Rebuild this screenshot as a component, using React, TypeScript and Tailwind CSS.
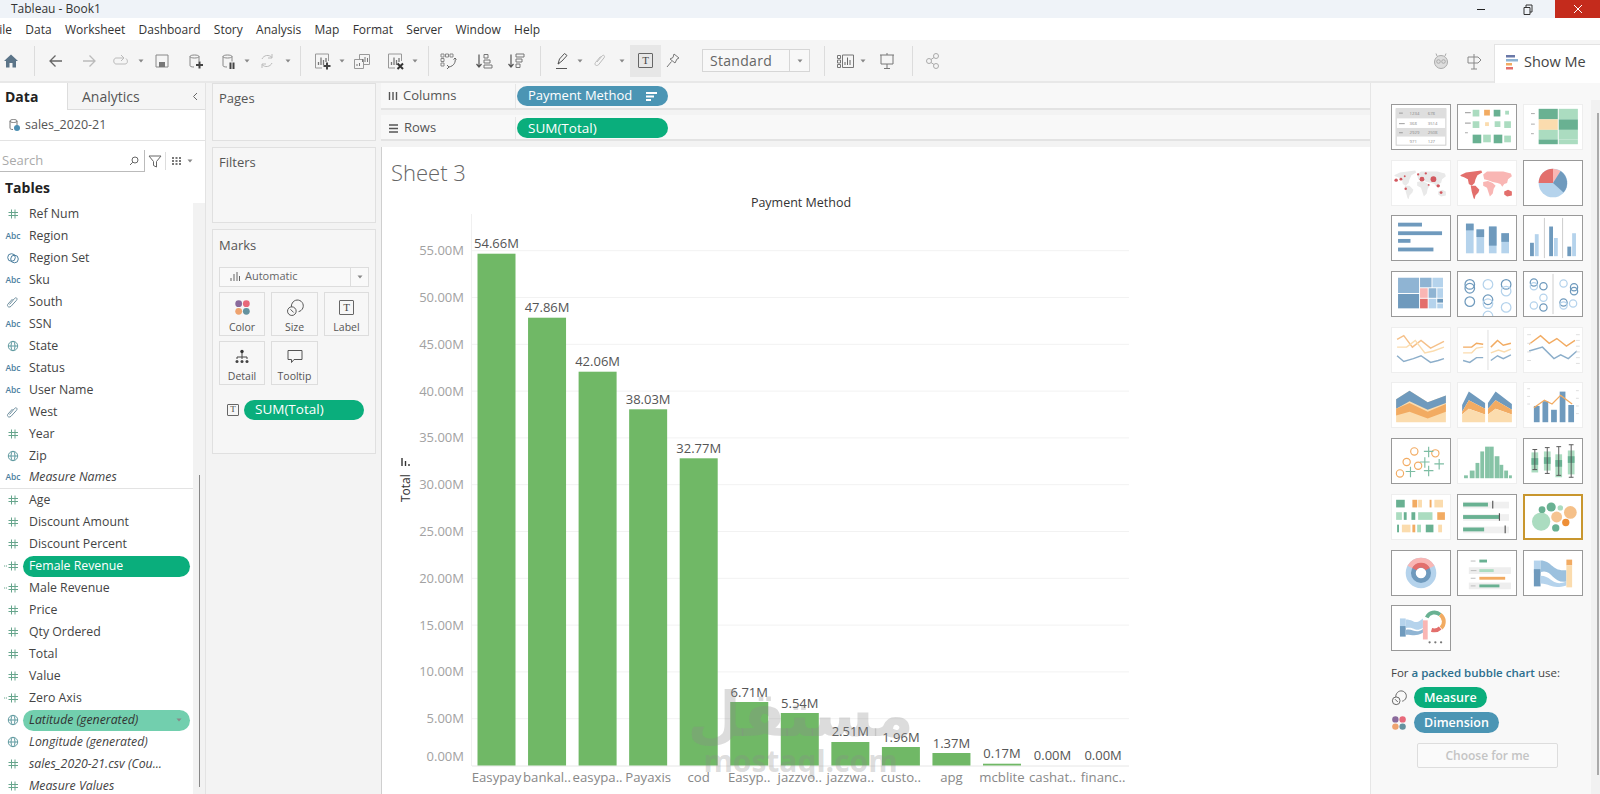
import type { ReactNode } from "react";

const MENU = ["File", "Data", "Worksheet", "Dashboard", "Story", "Analysis", "Map", "Format", "Server", "Window", "Help"];

type FieldKind = "hash" | "abc" | "set" | "clip" | "globe" | "calc";

const DIMENSIONS: { name: string; kind: FieldKind; italic?: boolean }[] = [
  { name: "Ref Num", kind: "hash" },
  { name: "Region", kind: "abc" },
  { name: "Region Set", kind: "set" },
  { name: "Sku", kind: "abc" },
  { name: "South", kind: "clip" },
  { name: "SSN", kind: "abc" },
  { name: "State", kind: "globe" },
  { name: "Status", kind: "abc" },
  { name: "User Name", kind: "abc" },
  { name: "West", kind: "clip" },
  { name: "Year", kind: "hash" },
  { name: "Zip", kind: "globe" },
  { name: "Measure Names", kind: "abc", italic: true },
];

const MEASURES: { name: string; kind: FieldKind; italic?: boolean; pill?: "solid" | "light" }[] = [
  { name: "Age", kind: "hash" },
  { name: "Discount Amount", kind: "hash" },
  { name: "Discount Percent", kind: "hash" },
  { name: "Female Revenue", kind: "calc", pill: "solid" },
  { name: "Male Revenue", kind: "calc" },
  { name: "Price", kind: "hash" },
  { name: "Qty Ordered", kind: "hash" },
  { name: "Total", kind: "hash" },
  { name: "Value", kind: "hash" },
  { name: "Zero Axis", kind: "calc" },
  { name: "Latitude (generated)", kind: "globe", italic: true, pill: "light" },
  { name: "Longitude (generated)", kind: "globe", italic: true },
  { name: "sales_2020-21.csv (Cou...", kind: "hash", italic: true },
  { name: "Measure Values", kind: "hash", italic: true },
];

// bars in page coordinates: top of bar, label y
const BARS = [
  { cat: "Easypay", label: "54.66M", top: 253.7, ly: 243 },
  { cat: "bankal..", label: "47.86M", top: 317.7, ly: 307.5 },
  { cat: "easypa..", label: "42.06M", top: 371.7, ly: 361 },
  { cat: "Payaxis", label: "38.03M", top: 409.3, ly: 399 },
  { cat: "cod", label: "32.77M", top: 458.3, ly: 448 },
  { cat: "Easyp..", label: "6.71M", top: 702, ly: 692 },
  { cat: "jazzvo..", label: "5.54M", top: 713, ly: 703 },
  { cat: "jazzwa..", label: "2.51M", top: 742, ly: 731 },
  { cat: "custo..", label: "1.96M", top: 747, ly: 737 },
  { cat: "apg", label: "1.37M", top: 753, ly: 743 },
  { cat: "mcblite", label: "0.17M", top: 763.7, ly: 753 },
  { cat: "cashat..", label: "0.00M", top: 765.5, ly: 755 },
  { cat: "financ..", label: "0.00M", top: 765.5, ly: 755 },
];

const AXIS = [55, 50, 45, 40, 35, 30, 25, 20, 15, 10, 5, 0];

function Ico({ children, w = 20, h = 20 }: { children: ReactNode; w?: number; h?: number }) {
  return (
    <svg width={w} height={h} viewBox={`0 0 ${w} ${h}`} fill="none" stroke="#777" strokeWidth="1" className="shrink-0 block">
      {children}
    </svg>
  );
}

function Caret({ className = "" }: { className?: string }) {
  return (
    <svg width="6" height="4" viewBox="0 0 6 4" className={`shrink-0 block ${className}`}>
      <path d="M0.5 0.5h5L3 3.5z" fill="#888" />
    </svg>
  );
}

function Sep({ className = "" }: { className?: string }) {
  return <div className={`w-px h-[30px] bg-[#dcdcdc] shrink-0 ${className}`} />;
}

function Cylinder({ badge }: { badge: "plus" | "pause" }) {
  return (
    <Ico>
      <path d="M5 5.500c0-2 9-2 9 0v5M5 5.500c0 2 9 2 9 0M5 5.500v9c0 1 1.500 1.500 4 1.500" stroke="#888" />
      {badge === "plus" ? (
        <path d="M14.500 10.500v7M11 14h7" stroke="#444" strokeWidth="2" />
      ) : (
        <path d="M12.500 11.500v6.500M15.500 11.500v6.500" stroke="#444" strokeWidth="2" />
      )}
    </Ico>
  );
}

function BarsBox({ badge }: { badge?: "plus" | "x" }) {
  return (
    <Ico>
      <path d="M14 3H3.500v14H10M14 3h2.500v7" stroke="#999" />
      <path d="M6.500 14v-3M9 14V6.500M11.500 14V9M14 11V7" stroke="#777" strokeWidth="1.300" />
      {badge === "plus" && <path d="M15 11.500v7M11.500 15h7" stroke="#444" strokeWidth="2" />}
      {badge === "x" && <path d="M12.500 12.500l5.500 5.500M18 12.500L12.500 18" stroke="#333" strokeWidth="2" />}
    </Ico>
  );
}

function HomeIcon() {
  return (
    <Ico>
      <path d="M10 3.500L3 10h2v6.500h3.500V12h3v4.500H15V10h2z" fill="#5b7488" stroke="none" />
    </Ico>
  );
}

function TBox({ size = 15, font = "text-[10px]" }: { size?: number; font?: string }) {
  return (
    <span
      className={`inline-flex items-center justify-center border border-[#666] rounded-[1px] text-[#444] font-['Liberation_Serif',serif] shrink-0 ${font}`}
      style={{ width: size, height: size }}
    >
      T
    </span>
  );
}

function ColorDots({ size = 20 }: { size?: number }) {
  return (
    <svg width={size} height={size} viewBox="0 0 20 20" className="block shrink-0">
      <circle cx="5.500" cy="5.500" r="4" fill="#8a6a9c" />
      <circle cx="14.500" cy="5.500" r="4" fill="#e8697a" />
      <circle cx="5.500" cy="14.500" r="4" fill="#eea36f" />
      <circle cx="14.500" cy="14.500" r="4" fill="#64929f" />
    </svg>
  );
}

function SizeGlyph({ size = 20 }: { size?: number }) {
  return (
    <svg width={size} height={size} viewBox="0 0 20 20" fill="none" stroke="#555" strokeWidth="1.100" className="block shrink-0">
      <circle cx="6.500" cy="13.500" r="4.800" />
      <path d="M5 11.500l3.500 3.500" />
      <path d="M7 4.500A6.500 6.500 0 1 1 14 14" />
      <path d="M7 4.500A6 6 0 0 0 6 8.700" />
    </svg>
  );
}

function FieldIcon({ kind }: { kind: FieldKind }) {
  if (kind === "abc") {
    return <span className="text-[8.500px] font-semibold text-[#4c7f9f] leading-none w-[16px] text-center">Abc</span>;
  }
  if (kind === "hash" || kind === "calc") {
    return (
      <svg width="18" height="12" viewBox="0 0 18 12" fill="none" stroke="#66a58c" strokeWidth="1" className="block">
        <path d="M7.500 1.500v9M11 1.500v9M4.500 4.500h9.500M4.500 7.500h9.500" />
        {kind === "calc" && <path d="M0 6h3" strokeDasharray="1.200 0.800" />}
      </svg>
    );
  }
  if (kind === "globe") {
    return (
      <svg width="18" height="12" viewBox="0 0 18 12" fill="none" stroke="#5f9aa0" strokeWidth="1" className="block">
        <circle cx="9" cy="6" r="4.700" />
        <ellipse cx="9" cy="6" rx="2" ry="4.700" />
        <path d="M4.300 6h9.400" />
      </svg>
    );
  }
  if (kind === "set") {
    return (
      <svg width="18" height="12" viewBox="0 0 18 12" fill="none" stroke="#4c7f9f" strokeWidth="1" className="block">
        <circle cx="7.500" cy="5.500" r="3.800" />
        <circle cx="10.500" cy="7" r="3.800" />
      </svg>
    );
  }
  return (
    <svg width="18" height="12" viewBox="0 0 18 12" fill="none" stroke="#6f8f9f" strokeWidth="1" className="block">
      <path d="M5.500 8.500l5-6c1.500-1.700 3.500 0 2 1.800l-5.500 6c-2.500 2-4.500-.5-3-2.300l4.500-5" />
    </svg>
  );
}

function Pill({ color, children, className = "" }: { color: string; children: ReactNode; className?: string }) {
  return <div className={`rounded-full flex items-center text-white ${color} ${className}`}>{children}</div>;
}

function MarkCell({ label, children, width }: { label: string; children: ReactNode; width: string }) {
  return (
    <div className={`h-[44px] border border-[#ddd] bg-[#f7f7f7] flex flex-col items-center pt-[6px] ${width}`}>
      <div className="h-[18px] flex items-center">{children}</div>
      <span className="text-[10.500px] text-[#555] mt-[3px] leading-[14px]">{label}</span>
    </div>
  );
}

function Thumb({ on, gold, children }: { on?: boolean; gold?: boolean; children: ReactNode }) {
  const border = gold ? "border-2 border-[#c8962e]" : on ? "border border-[#999]" : "border border-[#eeeeee]";
  return (
    <div className={`w-[60px] h-[46px] bg-white box-border ${border}`}>
      <svg viewBox="0 0 60 46" className="w-full h-full block">
        {children}
      </svg>
    </div>
  );
}

const B = "#6f9abd";
const BL = "#b5d3ec";
const G = "#69b192";
const GL = "#abdcc0";
const O = "#f2ab62";
const OL = "#fbdcae";
const R = "#e36f6c";
const P = "#f9b6b4";

// rough continents shared by the two map thumbnails
const NORTH_AMERICA = "M2 15l6-3 8-1 8-1 1 2-5 3-2 4-1 4-3 3-3-2-1-5-4-2-3-1z";
const SOUTH_AMERICA = "M13 26l5 0 4 4-1 3-3 3-1 4-1-1-2-7z";
const EURASIA = "M26 14l4-3 8 0 9 0 8 2 1 3-4 3-1 4-3 1-2 3-2-3-3-1-5-1-5-2-4-1z";
const AFRICA = "M26 22l5-1 5 2 3 3-2 3-1 5-3 3-2-6-1-3-4-2z";
const AUSTRALIA = "M48 32l4-2 4 2 0 4-5 1-3-2z";

function ThumbGrid() {
  return (
    <div className="grid grid-cols-[60px_60px_60px] gap-x-[6px] gap-y-[9.700px] w-[192px]">
      <Thumb on>
        <rect x="4" y="4" width="52" height="38" fill="#fff" stroke="#ccc" />
        <rect x="4" y="4" width="52" height="10" fill="#dedede" />
        <rect x="4" y="24" width="52" height="9" fill="#dedede" />
        {[
          ["1234", "678", 10.500],
          ["368", "3514", 20.500],
          ["2929", "2508", 30],
          ["971", "127", 39.500],
        ].map(([a, b, y]) => (
          <g key={String(a)} fill="#888" fontSize="4.500">
            <text x="18" y={y as number}>{a}</text>
            <text x="37" y={y as number}>{b}</text>
          </g>
        ))}
        <path d="M7 8.500h4M7 19.500h6M7 29h4" stroke="#999" />
      </Thumb>
      <Thumb on>
        <path d="M7 8h6M7 19h6M7 29h3" stroke="#aaa" strokeWidth="1.200" />
        <rect x="15" y="5" width="7" height="7" fill={GL} />
        <rect x="27" y="5" width="6" height="6" fill={O} />
        <rect x="37" y="5" width="7" height="7" fill={G} />
        <rect x="49" y="6" width="4" height="4" fill={GL} />
        <rect x="15" y="17" width="7" height="7" fill={GL} />
        <rect x="28" y="18" width="4" height="4" fill={OL} />
        <rect x="38" y="17" width="6" height="6" fill={GL} />
        <rect x="48" y="17" width="7" height="7" fill={GL} />
        <rect x="15" y="31" width="9" height="9" fill={G} />
        <rect x="26" y="31" width="8" height="8" fill={GL} />
        <rect x="37" y="31" width="9" height="9" fill={G} />
        <rect x="48" y="32" width="7" height="7" fill={GL} />
      </Thumb>
      <Thumb>
        <rect x="15" y="4" width="20" height="11" fill={G} />
        <rect x="36" y="4" width="20" height="11" fill={GL} />
        <rect x="15" y="15" width="20" height="11" fill={OL} />
        <rect x="36" y="15" width="20" height="11" fill={G} />
        <rect x="15" y="26" width="20" height="10" fill={GL} />
        <rect x="36" y="26" width="20" height="10" fill={GL} />
        <rect x="15" y="36" width="20" height="5" fill={G} />
        <rect x="36" y="36" width="20" height="5" fill={GL} />
        <path d="M7 9h4M7 20h4M7 30h3" stroke="#aaa" />
      </Thumb>
      <Thumb>
        <g fill="#e9e9e9">
          <path d={NORTH_AMERICA} />
          <path d={SOUTH_AMERICA} />
          <path d={EURASIA} />
          <path d={AFRICA} />
          <path d={AUSTRALIA} />
        </g>
        {[[4, 20, 1.800], [9, 19, 1.500], [13, 16, 1], [27, 14, 1.200], [31, 19, 2.500], [43, 19, 3], [35, 13, 1.200], [48, 26, 1.800], [14, 29, 1.300], [51, 33, 1.500], [38, 25, 1]].map(([x, y, r]) => (
          <circle key={`${x}-${y}`} cx={x} cy={y} r={r} fill="#d2585f" />
        ))}
      </Thumb>
      <Thumb>
        <path d={NORTH_AMERICA} fill={R} />
        <path d={SOUTH_AMERICA} fill={R} />
        <path d={EURASIA} fill={P} />
        <path d={AFRICA} fill={P} />
        <path d={AUSTRALIA} fill={R} />
      </Thumb>
      <Thumb on>
        <circle cx="30" cy="23" r="15" fill={BL} />
        <path d="M30 23V8a15 15 0 0 0-15 15z" fill={R} />
        <path d="M30 23V8a15 15 0 0 1 8 2.500z" fill={P} />
        <path d="M30 23l8-12.500A15 15 0 0 1 41 33z" fill={B} />
      </Thumb>
      <Thumb on>
        <rect x="6" y="7" width="25" height="4" fill={B} />
        <rect x="6" y="16" width="46" height="4" fill={B} />
        <rect x="6" y="24" width="13" height="4" fill={B} />
        <rect x="6" y="33" width="37" height="4" fill={B} />
      </Thumb>
      <Thumb on>
        {[[8, 8, 7], [19, 14, 8], [32, 11, 20], [45, 18, 9]].map(([x, t, d]) => (
          <g key={x}>
            <rect x={x} y={t} width="8" height={39 - t} fill={BL} />
            <rect x={x} y={t} width="8" height={d} fill={B} />
          </g>
        ))}
      </Thumb>
      <Thumb on>
        <path d="M21 2v42M40 2v42" stroke="#ccc" />
        <rect x="6" y="28" width="4" height="14" fill={B} />
        <rect x="11" y="19" width="4" height="23" fill={BL} />
        <rect x="26" y="11" width="4" height="31" fill={B} />
        <rect x="31" y="23" width="4" height="19" fill={BL} />
        <rect x="45" y="32" width="4" height="10" fill={B} />
        <rect x="50" y="18" width="4" height="24" fill={BL} />
      </Thumb>
      <Thumb on>
        <rect x="6" y="6" width="22" height="16" fill="#8fb4d3" />
        <rect x="6" y="23" width="22" height="15" fill={B} />
        <rect x="29" y="6" width="12" height="10" fill="#8fb4d3" />
        <rect x="42" y="6" width="11" height="10" fill={BL} />
        <rect x="29" y="17" width="8" height="10" fill={P} />
        <rect x="38" y="17" width="8" height="10" fill="#8fb4d3" />
        <rect x="47" y="17" width="6" height="10" fill={BL} />
        <rect x="29" y="28" width="8" height="10" fill={R} />
        <rect x="38" y="28" width="8" height="10" fill={BL} />
        <rect x="47" y="28" width="6" height="4" fill={B} />
        <rect x="47" y="33" width="6" height="5" fill={BL} />
      </Thumb>
      <Thumb on>
        <g fill="none" strokeWidth="1.300">
          {[[12, 13, B], [12, 17, B], [31, 13, BL], [12, 31, B], [31, 29, B], [31, 33, BL], [50, 13, B], [50, 20, BL], [50, 37, BL], [31, 46, BL]].map(([x, y, c]) => (
            <circle key={`${x}-${y}`} cx={x as number} cy={y as number} r="5" stroke={c as string} />
          ))}
        </g>
      </Thumb>
      <Thumb on>
        <path d="M30 2v42" stroke="#ccc" />
        <g fill="none" strokeWidth="1.300">
          {[[10, 11, B], [10, 15, BL], [20, 15, B], [20, 27, BL], [10, 35, BL], [20, 37, B], [41, 12, BL], [52, 16, B], [52, 20, B], [41, 32, B], [41, 35, BL], [51, 33, BL]].map(([x, y, c]) => (
            <circle key={`${x}-${y}`} cx={x as number} cy={y as number} r="3.800" stroke={c as string} />
          ))}
        </g>
      </Thumb>
      <Thumb>
        <path d="M5 12l7-4 9 12 9-7 10 8 14-7" stroke={O} strokeWidth="1.500" fill="none" opacity=".75" />
        <path d="M5 20l10 0 9-7 10 13 9-2 11-4" stroke={OL} strokeWidth="1.500" fill="none" />
        <path d="M5 29l7 6 10-3 8-3 10 7 8-2 6-2" stroke={B} strokeWidth="1.500" fill="none" opacity=".8" />
      </Thumb>
      <Thumb>
        <path d="M31 2v42" stroke="#ddd" />
        <path d="M5 20h9l5-4 7 1" stroke={O} strokeWidth="1.500" fill="none" />
        <path d="M5 26h9l5-5 7-1" stroke={OL} strokeWidth="1.500" fill="none" />
        <path d="M5 34l7 2 7-5 7 0" stroke={B} strokeWidth="1.500" fill="none" opacity=".8" />
        <path d="M34 20l7-7 6 5 8-2" stroke={O} strokeWidth="1.500" fill="none" />
        <path d="M34 26l8-3 6 2 7-3" stroke={OL} strokeWidth="1.500" fill="none" />
        <path d="M34 34l7-5 6 3 8-4" stroke={B} strokeWidth="1.500" fill="none" opacity=".8" />
      </Thumb>
      <Thumb>
        <path d="M5 17l12-9 9 8 8-5 10 8 9-6" stroke={O} strokeWidth="1.500" fill="none" />
        <path d="M5 24l14-4 12 12 7-4 8 4 9-8" stroke={B} strokeWidth="1.500" fill="none" opacity=".8" />
        <path d="M3 7h4M3 16h4M3 25h4M3 34h4M54 7h4M54 13h4M54 19h4M54 25h4M54 31h4M54 37h4" stroke="#ddd" />
      </Thumb>
      <Thumb>
        <path d="M4 17L18 8l19 12 19-7v28H4z" fill={OL} />
        <path d="M4 17L18 8l19 12 19-7v8l-19 7-19-9L4 27z" fill={B} />
        <path d="M4 27l14-6 19 9 19-8v8l-19 7-19-7-14 4z" fill={O} />
      </Thumb>
      <Thumb>
        <path d="M4 23L11 9L28 21V27L11 18L4 30zM31 21L39 9L56 22V28L39 18L31 27z" fill={B} />
        <path d="M4 30L11 18L28 27V33L11 27L4 33zM31 27L39 18L56 28V33L39 27L31 33z" fill={O} />
        <path d="M4 33L11 27L28 33V41H4zM31 33L39 27L56 33V41H31z" fill={OL} />
      </Thumb>
      <Thumb>
        <path d="M3 6h3M3 14h3M3 22h3M54 8h3M54 16h3M54 24h3M54 32h3" stroke="#ddd" />
        <rect x="10" y="24" width="6" height="17" fill={B} />
        <rect x="19" y="19" width="6" height="22" fill={B} />
        <rect x="28" y="28" width="6" height="13" fill={B} />
        <rect x="37" y="9" width="6" height="32" fill={B} />
        <rect x="46" y="23" width="6" height="18" fill={B} />
        <path d="M10 26l11-8 8 4 9-9 12 9" stroke={O} strokeWidth="1.300" fill="none" />
      </Thumb>
      <Thumb on>
        <g fill="none" stroke={O} strokeWidth="1.200">
          <circle cx="23" cy="13" r="3.800" />
          <circle cx="45" cy="15" r="3.800" />
          <circle cx="15" cy="24" r="3.800" />
          <circle cx="27" cy="28" r="3.800" />
          <circle cx="8" cy="36" r="3.800" />
        </g>
        <path d="M38 8v11M33 13h10M34 19v11M29 24h10M19 29v11M14 34h10M38 28v11M33 33h10M49 21v11M44 26h10" stroke="#7dbda3" strokeWidth="1.200" />
      </Thumb>
      <Thumb>
        {[[6, 38, 4], [12, 33, 5], [18, 25, 4], [23, 13, 4], [28, 8, 5], [33, 8, 4], [38, 18, 5], [43, 27, 4], [48, 33, 4], [53, 38, 3]].map(([x, y, w]) => (
          <rect key={x} x={x} y={y} width={w} height={41 - y} fill="#86c3a6" />
        ))}
      </Thumb>
      <Thumb on>
        {[[11, 11, 32, 14, 21], [24, 9, 36, 13, 20], [36, 8, 38, 16, 24], [49, 6, 40, 12, 25]].map(([x, t, b, bt, bh]) => (
          <g key={x}>
            <rect x={x - 3.500} y={bt} width="7" height={bh} fill={GL} />
            <rect x={x - 3.500} y={bt + 6} width="7" height="7" fill={G} />
            <path d={`M${x} ${t}V${b}M${x - 2.500} ${t}h5M${x - 2.500} ${b}h5`} stroke="#555" />
          </g>
        ))}
      </Thumb>
      <Thumb>
        <rect x="4" y="5" width="9" height="8" fill={G} />
        <rect x="21" y="5" width="5" height="8" fill={O} />
        <rect x="27" y="5" width="4" height="8" fill={OL} />
        <rect x="39" y="5" width="2" height="8" fill={O} />
        <rect x="44" y="5" width="9" height="8" fill={OL} />
        <rect x="4" y="18" width="6" height="8" fill={GL} />
        <rect x="12" y="18" width="3" height="8" fill={G} />
        <rect x="20" y="18" width="4" height="8" fill={G} />
        <rect x="27" y="18" width="15" height="8" fill={GL} />
        <rect x="47" y="18" width="8" height="8" fill={O} />
        <rect x="5" y="31" width="2" height="8" fill={G} />
        <rect x="10" y="31" width="9" height="8" fill={OL} />
        <rect x="21" y="31" width="3" height="8" fill={O} />
        <rect x="26" y="31" width="4" height="8" fill={GL} />
        <rect x="35" y="31" width="8" height="8" fill={G} />
        <rect x="48" y="31" width="4" height="8" fill={OL} />
      </Thumb>
      <Thumb on>
        <rect x="5" y="7" width="48" height="7" fill="#f0f0f0" />
        <rect x="5" y="20" width="48" height="7" fill="#f0f0f0" />
        <rect x="5" y="33" width="48" height="7" fill="#f0f0f0" />
        <rect x="5" y="8" width="26" height="4" fill={G} />
        <rect x="5" y="21" width="38" height="4" fill={G} />
        <rect x="5" y="34" width="22" height="4" fill={G} />
        <path d="M36 6v8M43 19v8M49 32v8" stroke="#555" strokeWidth="1.200" />
      </Thumb>
      <Thumb gold>
        <circle cx="17" cy="28" r="10" fill={GL} />
        <circle cx="18" cy="15" r="3.700" fill={G} />
        <circle cx="28" cy="12" r="5" fill={G} />
        <circle cx="38" cy="13" r="3" fill={GL} />
        <circle cx="34" cy="23" r="6" fill={O} opacity=".7" />
        <circle cx="49" cy="18" r="7" fill={O} opacity=".75" />
        <circle cx="44" cy="29" r="4" fill="#ee8f37" />
        <circle cx="33" cy="35" r="4" fill={G} />
      </Thumb>
      <Thumb on>
        <circle cx="30" cy="23" r="12.500" fill="none" stroke={BL} strokeWidth="7" />
        <path d="M19 17a12.500 12.500 0 0 1 22 0" fill="none" stroke={P} strokeWidth="7" />
        <circle cx="30" cy="23" r="8" fill="none" stroke={B} strokeWidth="5" />
        <path d="M23 19a8 8 0 0 1 14 0" fill="none" stroke={R} strokeWidth="5" />
      </Thumb>
      <Thumb on>
        <rect x="11" y="17" width="44" height="7" fill="#eee" />
        <rect x="11" y="33" width="44" height="7" fill="#eee" />
        <rect x="22" y="9" width="8" height="3" fill={G} />
        <rect x="22" y="19" width="15" height="3" fill={GL} />
        <rect x="22" y="27" width="27" height="3" fill={O} />
        <rect x="22" y="35" width="21" height="3" fill={G} />
        <path d="M13 10.500h5M13 20.500h6M13 28.500h5M13 36.500h5" stroke="#bbb" />
      </Thumb>
      <Thumb on>
        <rect x="10" y="10" width="7" height="13" fill={BL} />
        <rect x="10" y="19" width="7" height="18" fill={B} />
        <path d="M17 10c12 0 12 12 27 10v12c-15 2-15-14-27-10z" fill="#9cc1de" />
        <path d="M17 26c12 0 12 12 27 6v4c-15 4-15-1-27-2z" fill={BL} />
        <rect x="44" y="9" width="6" height="6" fill={O} />
        <rect x="44" y="15" width="6" height="23" fill={OL} />
      </Thumb>
      <Thumb on>
        <rect x="8" y="13" width="6" height="10" fill={BL} />
        <rect x="8" y="21" width="6" height="11" fill={B} />
        <path d="M14 14c10 0 8 7 18-1v10c-9 5-8-2-18 0z" fill={BL} />
        <path d="M14 25c8-2 10 5 18-1v4c-8 4-10 2-18 2z" fill="#8fb4d3" />
        <rect x="32" y="15" width="5" height="20" fill={P} />
        <path d="M36 12a9 9 0 0 1 14-3" stroke={G} strokeWidth="4" fill="none" />
        <path d="M50 9a9 9 0 0 1 1 14" stroke={O} strokeWidth="4" fill="none" />
        <path d="M50 23a9 9 0 0 1-9 2" stroke={R} strokeWidth="4" fill="none" />
        <circle cx="39" cy="38" r="1.200" fill="#777" />
        <circle cx="45" cy="38" r="1.200" fill="#777" />
        <circle cx="51" cy="38" r="1.200" fill="#777" />
      </Thumb>
    </div>
  );
}

function Chart() {
  const step = 46.8;
  const zero = 765.5;
  return (
    <svg viewBox="383 190 988 604" width="988" height="604" className="block font-['Open_Sans',sans-serif]">
      <text x="802" y="207" textAnchor="middle" fontSize="12.500" fill="#333">Payment Method</text>
      <path d="M472.500 214V766" stroke="#f0f0f0" />
      {AXIS.map((v) => {
        const y = zero - (v / 5) * step;
        return (
          <g key={v}>
            {v > 0 && <path d={`M473 ${y}H1130`} stroke="#f2f2f2" />}
            <text x="465" y={v === 0 ? 760.500 : y + 4.500} textAnchor="end" fontSize="13" fill="#a2a2a2">
              {v.toFixed(2)}M
            </text>
          </g>
        );
      })}
      <path d="M473 766H1130" stroke="#e6e6e6" />
      {BARS.map((b, i) => {
        const cx = 497.500 + i * 50.55;
        return (
          <g key={i}>
            <rect x={cx - 19} y={b.top} width="38" height={zero - b.top} fill="#70b866" />
            <text x={cx} y={b.ly + 4.500} textAnchor="middle" fontSize="13" fill="#555">{b.label}</text>
            <text x={cx} y="781.500" textAnchor="middle" fontSize="13.200" fill="#888">{b.cat}</text>
          </g>
        );
      })}
      <text transform="translate(411 502) rotate(-90)" fontSize="12" fill="#333">Total</text>
      <path d="M403 466v-8M406.500 466v-5M410 466v-2" stroke="#333" strokeWidth="1.400" />
    </svg>
  );
}

export default function App() {
  return (
    <div className="relative w-[1600px] h-[794px] overflow-hidden flex flex-col bg-[#f3f3f3] font-['Open_Sans',sans-serif] text-[#444]">
      {/* title bar */}
      <div className="h-[18px] bg-[#eff3f8] flex items-center shrink-0">
        <span className="ml-[11px] text-[12px] text-[#333] leading-none">Tableau - Book1</span>
        <div className="flex-1" />
        <div className="w-[8px] h-px bg-[#222] mr-[38px]" />
        <svg width="10" height="11" viewBox="0 0 10 11" fill="none" stroke="#333" className="mr-[22px] block">
          <path d="M1 3.500h6v7H1zM3 3.500V1h6v7H7" />
        </svg>
        <div className="w-[45px] h-[18px] bg-[#c42b1c] flex items-center justify-center">
          <svg width="10" height="10" viewBox="0 0 10 10" stroke="#fff" className="block">
            <path d="M1 1l8 8M9 1L1 9" />
          </svg>
        </div>
      </div>

      {/* menu bar */}
      <div className="h-[22px] pt-[1px] bg-white flex items-center gap-[13.300px] -ml-[7px] shrink-0 text-[12px] text-[#333]">
        {MENU.map((m) => (
          <span key={m}>{m}</span>
        ))}
      </div>

      {/* toolbar */}
      <div className="h-[43px] bg-[#f5f5f5] border-b-2 border-[#e8e8e8] flex items-center shrink-0">
        <div className="ml-[1px]"><HomeIcon /></div>
        <Sep className="ml-[13px]" />
        <div className="ml-[11px]">
          <Ico><path d="M16 10H4M9.500 4.500L4 10l5.500 5.500" stroke="#666" strokeWidth="1.300" /></Ico>
        </div>
        <div className="ml-[13px]">
          <Ico><path d="M4 10h12M10.500 4.500L16 10l-5.500 5.500" stroke="#bbb" strokeWidth="1.300" /></Ico>
        </div>
        <div className="ml-[11px]">
          <Ico><path d="M14 7H6c-3 0-3 6 0 6h9c3 0 3-4 1-5.500M11 4l3 3-3 3" stroke="#bbb" /></Ico>
        </div>
        <Caret className="ml-[8px]" />
        <div className="ml-[8px]">
          <Ico><path d="M4 4h12v12H4z" stroke="#888" /><rect x="7" y="11" width="6" height="5" fill="#777" stroke="none" /></Ico>
        </div>
        <div className="ml-[13px]"><Cylinder badge="plus" /></div>
        <div className="ml-[13px]"><Cylinder badge="pause" /></div>
        <Caret className="ml-[6px]" />
        <div className="ml-[7px]">
          <Ico><path d="M5 8a6 6 0 0 1 10-1.500M15 12a6 6 0 0 1-10 1.500" stroke="#bbb" /><path d="M15 3v4h-4M5 17v-4h4" stroke="#bbb" /></Ico>
        </div>
        <Caret className="ml-[8px]" />
        <Sep className="ml-[9px]" />
        <div className="ml-[11px]"><BarsBox badge="plus" /></div>
        <Caret className="ml-[7px]" />
        <div className="ml-[7px]">
          <Ico><path d="M2.500 8.500h9v9h-9zM7.500 8.500V3.500h10v10h-6" stroke="#999" /><path d="M10.500 11V8M13 11V6M15.500 11V7M5 15v-2M7.500 15v-3" stroke="#777" /></Ico>
        </div>
        <div className="ml-[13px]"><BarsBox badge="x" /></div>
        <Caret className="ml-[7px]" />
        <Sep className="ml-[10px]" />
        <div className="ml-[9px]">
          <Ico>
            <path d="M3 3h3v3H3zM7.500 3h3v3h-3zM12 3h3v3h-3zM3 7.500h3v3H3zM3 12h3v3H3z" stroke="#888" />
            <path d="M17 7c1 4-1 8-6 9M9 14l2 2-2 2M15.500 8.500L17 7l1.500 1.500" stroke="#666" />
          </Ico>
        </div>
        <div className="ml-[16px]">
          <Ico>
            <path d="M5 3.500v12M2.500 13L5 16l2.500-3" stroke="#555" strokeWidth="1.200" />
            <path d="M10 3.500h4v3.500h-4zM10 9h6v3h-6zM10 14h8v3h-8z" stroke="#777" />
          </Ico>
        </div>
        <div className="ml-[12px]">
          <Ico>
            <path d="M5 3.500v12M2.500 13L5 16l2.500-3" stroke="#555" strokeWidth="1.200" />
            <path d="M10 3h8v3h-8zM10 8h6v3h-6zM10 13h4v3.500h-4z" stroke="#777" />
          </Ico>
        </div>
        <Sep className="ml-[14px]" />
        <div className="ml-[11px]">
          <Ico><path d="M6 13l1.500-5 5-5.500 2.500 2L10 10zM6 13l1.500-1M4 17.500h11" stroke="#555" /></Ico>
        </div>
        <Caret className="ml-[5px]" />
        <div className="ml-[8px]">
          <Ico><path d="M6 11l5-6c1.500-1.700 3.500 0 2 1.800l-5.500 7c-2.500 2-4.500-.5-3-2.300l5-6" stroke="#bbb" /></Ico>
        </div>
        <Caret className="ml-[8px]" />
        <div className="ml-[5px] w-[31px] h-[32px] bg-[#e7e7e7] flex items-center justify-center shrink-0">
          <TBox size={15} font="text-[11px]" />
        </div>
        <div className="ml-[2px]">
          <Ico><path d="M11 3l5 4-2 1-2 4-5-4 3-1.500zM8.500 10.500L4 16" stroke="#777" /></Ico>
        </div>
        <div className="ml-[19px] w-[108px] h-[23px] border border-[#d6d6d6] bg-[#f8f8f8] flex items-center shrink-0">
          <span className="pl-[7px] text-[14px] tracking-[0.3px] text-[#666] flex-1">Standard</span>
          <div className="w-[20px] h-full border-l border-[#d6d6d6] flex items-center justify-center">
            <Caret />
          </div>
        </div>
        <Sep className="ml-[14px]" />
        <div className="ml-[10px]">
          <Ico>
            <path d="M2.500 4.500h3v3h-3zM2.500 9h3v3h-3zM2.500 13.500h3v3h-3zM7.500 4h11v12.500h-11z" stroke="#777" />
            <path d="M10 14v-3M12.500 14V6.500M15 14V9" stroke="#666" />
          </Ico>
        </div>
        <Caret className="ml-[5px]" />
        <div className="ml-[11px]">
          <Ico><path d="M3 4h14M4 4v9h12V4M10 13v4M7 17.500h6M10 2v2" stroke="#777" /></Ico>
        </div>
        <Sep className="ml-[15px]" />
        <div className="ml-[10px]">
          <Ico>
            <circle cx="6" cy="10" r="2.500" stroke="#aaa" />
            <circle cx="13" cy="5" r="2.500" stroke="#aaa" />
            <circle cx="13" cy="15" r="2.500" stroke="#aaa" />
            <path d="M8 8.500l3-2M8 11.500l3 2" stroke="#aaa" />
          </Ico>
        </div>
        <div className="flex-1" />
        <Ico>
          <circle cx="10" cy="11" r="6.500" fill="#ddd" stroke="#aaa" />
          <circle cx="7.500" cy="10.500" r="1.800" stroke="#aaa" />
          <circle cx="12.500" cy="10.500" r="1.800" stroke="#aaa" />
          <path d="M6 5L5 2.500M14 5l1-2.500" stroke="#aaa" />
        </Ico>
        <div className="ml-[13px]">
          <Ico><path d="M10 3v15M7 18h6M4 6h10l3 3-3 3H4z" stroke="#888" /></Ico>
        </div>
        <div className="ml-[10px] w-[106px] h-[39px] mt-[3px] -mb-[3px] pb-[5px] bg-white border-l border-t border-[#e3e3e3] flex items-center shrink-0">
          <svg width="12" height="16" viewBox="0 0 12 16" className="ml-[11px] block">
            <rect x="0" y="1" width="9" height="2.500" fill="#6a78a8" />
            <rect x="0" y="5" width="12" height="2.500" fill="#8fb4d3" />
            <rect x="0" y="9" width="6" height="2.500" fill="#f2ab62" />
            <rect x="0" y="13" width="7" height="2.500" fill="#e36f6c" />
          </svg>
          <span className="ml-[6px] text-[14.500px] text-[#444]">Show Me</span>
        </div>
      </div>

      {/* body */}
      <div className="flex-1 flex min-h-0">
        {/* data pane */}
        <div className="w-[206px] bg-white shrink-0 flex flex-col border-r border-[#e3e3e3]">
          <div className="h-[27px] flex shrink-0">
            <div className="w-[67px] flex items-center pl-[5px] font-bold text-[14px] text-[#222]">Data</div>
            <div className="flex-1 bg-[#f5f5f5] border-l border-b border-[#ddd] flex items-center pl-[14px] text-[14px] text-[#555]">
              <span className="flex-1">Analytics</span>
              <svg width="6" height="9" viewBox="0 0 6 9" fill="none" stroke="#666" className="mr-[7px] block">
                <path d="M5 1L1.500 4.500 5 8" />
              </svg>
            </div>
          </div>
          <div className="h-[31px] flex items-center border-b border-[#e3e3e3] shrink-0">
            <svg width="14" height="14" viewBox="0 0 14 14" fill="none" className="ml-[8px] block">
              <path d="M2 3c0-2 7-2 7 0v5M2 3c0 2 7 2 7 0M2 3v7c0 1 1 1.500 3 1.500" stroke="#777" />
              <circle cx="9" cy="10" r="3" fill="#4c8fb3" />
            </svg>
            <span className="ml-[3px] text-[12.500px] text-[#555]">sales_2020-21</span>
          </div>
          <div className="h-[31px] flex items-center shrink-0 pt-[9px]">
            <div className="w-[145px] h-[22px] border-b border-r border-[#bbb] flex items-center">
              <span className="ml-[2px] flex-1 text-[13px] text-[#aaa]">Search</span>
              <svg width="10" height="10" viewBox="0 0 10 10" fill="none" stroke="#666" className="mr-[5px] block">
                <circle cx="6" cy="4" r="3" />
                <path d="M3.800 6.200L1 9" />
              </svg>
            </div>
            <svg width="14" height="13" viewBox="0 0 14 13" fill="none" stroke="#666" className="ml-[3px] block">
              <path d="M1 1h12L8.500 6.500V12l-3-1.500v-4z" />
            </svg>
            <div className="w-px h-[18px] bg-[#ddd] ml-[3px]" />
            <svg width="12" height="10" viewBox="0 0 12 10" className="ml-[5px] block">
              <path d="M1 1h2v2H1zM4.500 1h2v2h-2zM8 1h2v2H8zM1 4h2v2H1zM4.500 4h2v2h-2zM8 4h2v2H8zM1 7h2v2H1zM4.500 7h2v2h-2zM8 7h2v2H8z" fill="#777" />
            </svg>
            <Caret className="ml-[4px]" />
          </div>
          <div className="h-[31px] flex items-center pl-[5px] font-bold text-[14px] text-[#222] shrink-0">Tables</div>
          <div className="flex flex-1 min-h-0">
            <div className="w-[193px] shrink-0 text-[12.300px] text-[#444]">
              {DIMENSIONS.map((f, i) => (
                <div
                  key={f.name}
                  className={`h-[22px] flex items-center pl-[4px] ${i === DIMENSIONS.length - 1 ? "border-b border-[#e3e3e3]" : ""}`}
                >
                  <span className="w-[18px] flex justify-center"><FieldIcon kind={f.kind} /></span>
                  <span className={`ml-[7px] ${f.italic ? "italic" : ""}`}>{f.name}</span>
                </div>
              ))}
              {MEASURES.map((f) => (
                <div key={f.name} className="h-[22px] flex items-center pl-[4px]">
                  <span className="w-[18px] flex justify-center"><FieldIcon kind={f.kind} /></span>
                  {f.pill ? (
                    <div
                      className={`ml-[1px] w-[167px] h-[21px] rounded-full flex items-center pl-[6px] ${
                        f.pill === "solid" ? "bg-[#0aae7c] text-white" : "bg-[#72cfae] text-[#333]"
                      }`}
                    >
                      <span className={`flex-1 ${f.italic ? "italic" : ""}`}>{f.name}</span>
                      {f.pill === "light" && <Caret className="mr-[8px]" />}
                    </div>
                  ) : (
                    <span className={`ml-[7px] whitespace-nowrap ${f.italic ? "italic" : ""}`}>{f.name}</span>
                  )}
                </div>
              ))}
            </div>
            <div className="flex-1 bg-[#f2f2f2] pt-[272px]">
              <div className="ml-[6px] w-px h-[312px] bg-[#888]" />
            </div>
          </div>
        </div>

        {/* shelves: pages, filters, marks */}
        <div className="w-[164px] ml-[6px] shrink-0 flex flex-col gap-[6px] text-[13px] text-[#555]">
          <div className="h-[58px] bg-[#f6f6f6] border border-[#e0e0e0] pl-[6px] pt-[5px]">Pages</div>
          <div className="h-[76px] bg-[#f6f6f6] border border-[#e0e0e0] pl-[6px] pt-[5px]">Filters</div>
          <div className="h-[225px] bg-[#f6f6f6] border border-[#e0e0e0] pl-[6px] pt-[6px]">
            <div>Marks</div>
            <div className="mt-[11px] w-[150px] h-[20px] border border-[#ddd] bg-[#f9f9f9] flex items-center">
              <svg width="10" height="10" viewBox="0 0 10 10" stroke="#666" className="ml-[10px] block">
                <path d="M1 9V6M4 9V2M7 9V0M9.500 9V4" />
              </svg>
              <span className="ml-[5px] text-[11px] text-[#666] flex-1">Automatic</span>
              <div className="w-[18px] h-full border-l border-[#ddd] flex items-center justify-center"><Caret /></div>
            </div>
            <div className="mt-[5px] flex gap-[6px]">
              <MarkCell label="Color" width="w-[46px]"><ColorDots size={17} /></MarkCell>
              <MarkCell label="Size" width="w-[47px]"><SizeGlyph size={18} /></MarkCell>
              <MarkCell label="Label" width="w-[45px]"><TBox size={15} font="text-[11px]" /></MarkCell>
            </div>
            <div className="mt-[5px] flex gap-[6px]">
              <MarkCell label="Detail" width="w-[46px]">
                <svg width="16" height="16" viewBox="0 0 16 16" fill="none" stroke="#444" className="block">
                  <circle cx="8" cy="2.500" r="1.700" fill="#333" stroke="none" />
                  <path d="M8 4v6M3 10V8h10v2" />
                  <circle cx="3" cy="12.500" r="1.500" fill="#444" stroke="none" />
                  <circle cx="8" cy="12.500" r="1.500" fill="#444" stroke="none" />
                  <circle cx="13" cy="12.500" r="1.500" fill="#444" stroke="none" />
                </svg>
              </MarkCell>
              <MarkCell label="Tooltip" width="w-[47px]">
                <svg width="16" height="15" viewBox="0 0 16 15" fill="none" stroke="#555" className="block">
                  <path d="M1 1.500h14v9H7l-2.500 3v-3H1z" />
                </svg>
              </MarkCell>
            </div>
            <div className="mt-[15px] flex items-center pl-[8px]">
              <TBox size={12} font="text-[9px]" />
              <Pill color="bg-[#0aae7c]" className="ml-[5px] w-[120px] h-[20px] pl-[11px] text-[13.500px]">SUM(Total)</Pill>
            </div>
          </div>
        </div>

        {/* columns, rows, sheet */}
        <div className="ml-[5px] w-[989px] shrink-0 flex flex-col">
          <div className="h-[27px] pt-[1px] bg-[#f8f8f8] border-b-2 border-[#e3e3e3] flex items-center text-[13px] text-[#555]">
            <div className="w-[135px] h-full flex items-center border-r border-[#e6e6e6] pl-[7px]">
              <svg width="10" height="10" viewBox="0 0 10 10" stroke="#555" strokeWidth="1.400" className="block">
                <path d="M1.500 1v8M5 1v8M8.500 1v8" />
              </svg>
              <span className="ml-[5px]">Columns</span>
            </div>
            <Pill color="bg-[#4b95b4]" className="ml-[1px] w-[151px] h-[20px] pl-[11px] text-[13px]">
              <span className="flex-1">Payment Method</span>
              <svg width="12" height="9" viewBox="0 0 12 9" fill="#fff" className="mr-[10px] block">
                <rect x="0" y="0" width="11" height="2" />
                <rect x="0" y="3.500" width="8" height="2" />
                <rect x="0" y="7" width="5" height="2" />
              </svg>
            </Pill>
          </div>
          <div className="h-[26px] pt-[2px] mt-[5px] bg-[#f8f8f8] border-b-2 border-[#e3e3e3] flex items-center text-[13px] text-[#555]">
            <div className="w-[135px] h-full flex items-center border-r border-[#e6e6e6] pl-[7px]">
              <svg width="11" height="9" viewBox="0 0 11 9" stroke="#555" strokeWidth="1.300" className="block">
                <path d="M1 1h9M1 4.500h9M1 8h9" />
              </svg>
              <span className="ml-[5px]">Rows</span>
            </div>
            <Pill color="bg-[#0aae7c]" className="ml-[1px] w-[151px] h-[20px] pl-[11px] text-[13.500px]">SUM(Total)</Pill>
          </div>
          <div className="mt-[6px] flex-1 bg-white border-l border-[#cfcfcf] min-h-0">
            <div className="h-[43px] pt-[7px] flex items-center pl-[9px] text-[22px] font-light text-[#666]">Sheet 3</div>
            <Chart />
          </div>
        </div>

        {/* show me */}
        <div className="flex-1 bg-[#f8f8f8] flex border-l border-[#e6e6e6]">
          <div className="w-[220px] pl-[20px] pt-[21px] shrink-0">
            <ThumbGrid />
            <p className="mt-[13px] text-[11.500px] text-[#444] whitespace-nowrap">
              For <span className="font-semibold text-[#2d6f8e]">a packed bubble chart</span> use:
            </p>
            <div className="mt-[6px] flex items-center gap-[7px]">
              <SizeGlyph size={16} />
              <Pill color="bg-[#0aae7c]" className="h-[21px] px-[10px] font-semibold text-[12.500px]">Measure</Pill>
            </div>
            <div className="mt-[4px] flex items-center gap-[7px]">
              <ColorDots size={16} />
              <Pill color="bg-[#4b95b4]" className="h-[21px] px-[10px] font-semibold text-[12.500px]">Dimension</Pill>
            </div>
            <div className="mt-[10px] ml-[26px] w-[141px] h-[25px] border border-[#ddd] rounded-[2px] bg-[#fafafa] flex items-center justify-center text-[12px] font-semibold text-[#c4c4c4]">
              Choose for me
            </div>
          </div>
          <div className="flex-1 bg-[#f1f1f1] mt-[17px] pl-[6px] pt-[13px]">
            <div className="w-[2px] h-[662px] bg-[#aaa]" />
          </div>
        </div>
      </div>

      {/* site watermark over the chart */}
      <div className="absolute left-[703px] top-[683px] w-[195px] flex flex-col items-center pointer-events-none text-[#8c8c8c]/30 font-bold">
        <span dir="rtl" className="font-['DejaVu_Sans',sans-serif] text-[62px] leading-[63px]">مستقل</span>
        <span className="font-['Open_Sans',sans-serif] text-[30px] leading-[30px]">mostaql.com</span>
      </div>
    </div>
  );
}
